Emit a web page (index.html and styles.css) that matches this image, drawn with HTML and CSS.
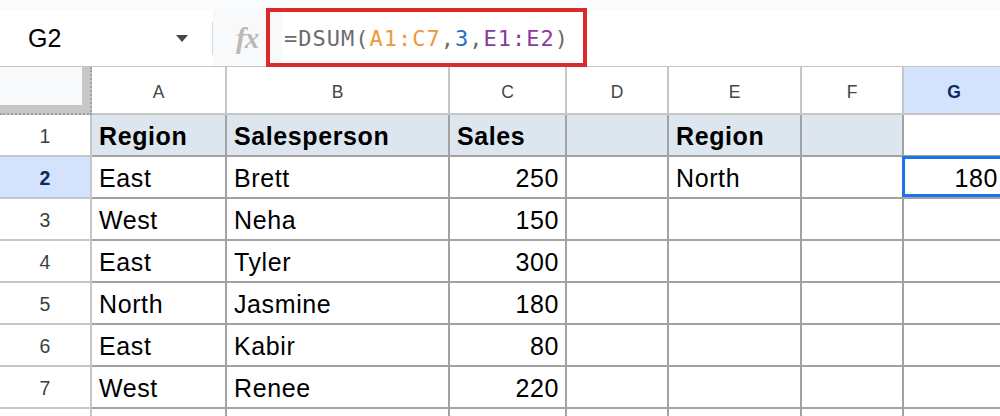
FILE: index.html
```html
<!DOCTYPE html>
<html>
<head>
<meta charset="utf-8">
<link rel="stylesheet" href="styles.css">
</head>
<body>
<div class="app">
  <div class="topstrip"></div>
  <div class="fbar">
    <div class="namebox">
      <span class="ref">G2</span>
      <svg class="caret" width="12" height="7" viewBox="0 0 12 7"><path d="M0 0 L12 0 L6 7 Z" fill="#444746"/></svg>
    </div>
    <div class="sep"></div>
    <div class="fxzone"><span class="fx">fx</span></div>
    <div class="input"><span class="t-g">=DSUM(</span><span class="t-o">A1:C7</span><span class="t-g">,</span><span class="t-b">3</span><span class="t-g">,</span><span class="t-p">E1:E2</span><span class="t-g">)</span></div>
    <div class="redbox"></div>
  </div>
  <div class="grid">
    <div class="corner"><div class="corner-in"></div></div>
    <div class="ch">A</div><div class="ch">B</div><div class="ch">C</div><div class="ch">D</div><div class="ch">E</div><div class="ch">F</div><div class="ch sel">G</div>

    <div class="rh">1</div>
    <div class="c hd b">Region</div><div class="c hd b">Salesperson</div><div class="c hd b">Sales</div><div class="c hd"></div><div class="c hd b">Region</div><div class="c hd"></div><div class="c"></div>

    <div class="rh sel">2</div>
    <div class="c">East</div><div class="c">Brett</div><div class="c r">250</div><div class="c"></div><div class="c">North</div><div class="c"></div><div class="c r active">180<div class="selbox"></div></div>

    <div class="rh">3</div>
    <div class="c">West</div><div class="c">Neha</div><div class="c r">150</div><div class="c"></div><div class="c"></div><div class="c"></div><div class="c"></div>

    <div class="rh">4</div>
    <div class="c">East</div><div class="c">Tyler</div><div class="c r">300</div><div class="c"></div><div class="c"></div><div class="c"></div><div class="c"></div>

    <div class="rh">5</div>
    <div class="c">North</div><div class="c">Jasmine</div><div class="c r">180</div><div class="c"></div><div class="c"></div><div class="c"></div><div class="c"></div>

    <div class="rh">6</div>
    <div class="c">East</div><div class="c">Kabir</div><div class="c r">80</div><div class="c"></div><div class="c"></div><div class="c"></div><div class="c"></div>

    <div class="rh">7</div>
    <div class="c">West</div><div class="c">Renee</div><div class="c r">220</div><div class="c"></div><div class="c"></div><div class="c"></div><div class="c"></div>

    <div class="rh"></div>
    <div class="c"></div><div class="c"></div><div class="c"></div><div class="c"></div><div class="c"></div><div class="c"></div><div class="c"></div>
  </div>
</div>
</body>
</html>
```
FILE: styles.css
```css
html, body {
  margin: 0;
  padding: 0;
  background: #ffffff;
  overflow: hidden;
}
.app {
  width: 1000px;
  height: 416px;
  overflow: hidden;
  font-family: "Liberation Sans", Arial, sans-serif;
}
.topstrip {
  height: 10px;
  background: #f9fbfd;
}
.fbar {
  position: relative;
  height: 56px;
  display: flex;
  align-items: stretch;
  border-bottom: 1px solid #c4c7c5;
  background: #ffffff;
}
.namebox {
  width: 212px;
  display: flex;
  align-items: center;
  box-sizing: border-box;
  padding-left: 28px;
  padding-right: 24px;
  justify-content: space-between;
}
.ref {
  font-size: 25px;
  color: #000;
}
.caret {
  display: block;
  margin-top: 1px;
}
.sep {
  width: 1px;
  margin: 12px 0 11px;
  background: #d3dae2;
}
.fxzone {
  width: 69px;
  background: #f8f9fa;
  display: flex;
  align-items: center;
  padding-left: 23px;
  box-sizing: border-box;
}
.fx {
  font-family: "Liberation Serif", "Times New Roman", serif;
  font-style: italic;
  font-weight: bold;
  font-size: 29px;
  color: #b9b9b9;
  letter-spacing: -1px;
}
.input {
  flex: 1;
  display: flex;
  align-items: center;
  padding-left: 2px;
  font-family: "DejaVu Sans Mono", monospace;
  font-size: 22px;
  letter-spacing: 1px;
}
.t-g { color: #6b6b6b; }
.t-o { color: #ee9a3a; }
.t-b { color: #1f6fd1; }
.t-p { color: #8a3b9b; }
.redbox {
  position: absolute;
  left: 266px;
  top: -2px;
  width: 321px;
  height: 59px;
  box-sizing: border-box;
  border: 4.5px solid #dc2a2a;
}
.grid {
  display: grid;
  grid-template-columns: 92px 135px 223px 117px 102px 133px 102px 102px;
  grid-template-rows: 48px repeat(8, 42px);
}
.grid > div {
  box-sizing: border-box;
}
.corner {
  background: #c7c7c7;
  border-right: 2px dotted #a0a0a0;
  border-bottom: 2px dotted #a0a0a0;
}
.corner-in {
  width: 82px;
  height: 38px;
  background: #f8f9fa;
}
.ch {
  border-right: 2px solid #c6c6c6;
  border-bottom: 2px solid #c6c6c6;
  display: flex;
  align-items: center;
  justify-content: center;
  font-size: 17.5px;
  color: #444746;
  padding-top: 4px;
}
.ch.sel, .rh.sel {
  background: #d3e3fd;
  color: #0b2a5e;
  font-weight: bold;
}
.rh {
  border-right: 2px solid #c6c6c6;
  border-bottom: 2px solid #c6c6c6;
  display: flex;
  align-items: center;
  justify-content: center;
  font-size: 19.5px;
  color: #3c3f41;
  padding-top: 2px;
}
.c {
  position: relative;
  border-right: 2px solid #a2a2a2;
  border-bottom: 2px solid #a2a2a2;
  display: flex;
  align-items: center;
  padding: 3px 6px 0 7px;
  font-size: 25px;
  letter-spacing: 0.6px;
  color: #000;
  white-space: nowrap;
}
.c.hd {
  background: #dde6ef;
}
.c.b {
  font-weight: bold;
}
.c.r {
  justify-content: flex-end;
}
.selbox {
  position: absolute;
  left: -2px;
  top: -1px;
  right: -2px;
  bottom: 0;
  border: 3px solid #1a73e8;
  pointer-events: none;
}
```
